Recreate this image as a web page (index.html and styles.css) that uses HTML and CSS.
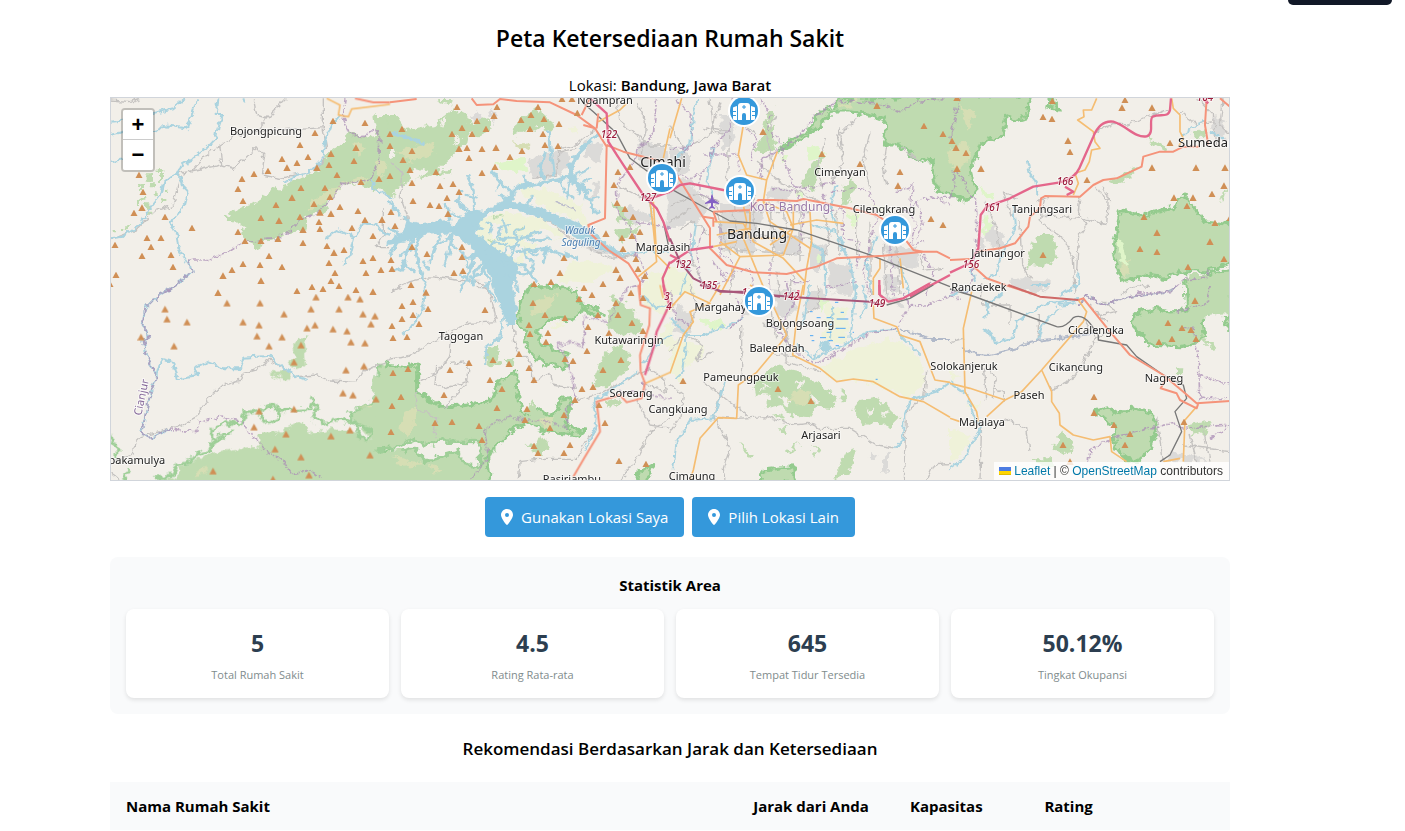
FILE: index.html
```html
<!DOCTYPE html>
<html lang="id">
<head>
<meta charset="utf-8">
<meta name="viewport" content="width=device-width, initial-scale=1">
<title>Peta Ketersediaan Rumah Sakit</title>
<link rel="stylesheet" href="styles.css">
</head>
<body>
<div class="toast" aria-hidden="true"></div>
<main class="page">
<h1 class="title">Peta Ketersediaan Rumah Sakit</h1>
<p class="place">Lokasi: <strong>Bandung, Jawa Barat</strong></p>

<section class="map" aria-label="Peta rumah sakit">
<svg class="map-canvas" viewBox="111 98 1118 382" preserveAspectRatio="xMidYMid slice">
<defs>
<filter id="rough" filterUnits="userSpaceOnUse" x="100" y="90" width="1140" height="400"><feTurbulence type="fractalNoise" baseFrequency="0.13" numOctaves="3" seed="4"/><feDisplacementMap in="SourceGraphic" scale="11" xChannelSelector="R" yChannelSelector="G"/></filter>
<filter id="wavy" filterUnits="userSpaceOnUse" x="100" y="90" width="1140" height="400"><feTurbulence type="fractalNoise" baseFrequency="0.16" numOctaves="2" seed="9"/><feDisplacementMap in="SourceGraphic" scale="7" xChannelSelector="R" yChannelSelector="G"/></filter>
<marker id="peak" markerUnits="userSpaceOnUse" markerWidth="22" markerHeight="20" refX="11" refY="10" viewBox="0 0 22 20"><path class="peak" d="M11 0 22 20H0Z"/></marker>
<g id="hospital"><circle class="pin-ring" r="16"/><circle class="pin-disc" r="14"/><path class="pin-icon" d="M-6 9V-5Q-6-8-3-8H3Q6-8 6-5V9H2V4Q2 2 0 2T-2 4V9ZM-7 9H-10Q-11 9-11 8V5H-8V4H-11V1H-8V0H-11V-3Q-11-4-10-4L-7-5ZM7 9H10Q11 9 11 8V5H8V4H11V1H8V0H11V-3Q11-4 10-4L7-5Z"/><path class="pin-cross" d="M0-6V-2M-2-4H2"/></g>
</defs>
<rect class="land" x="100" y="90" width="1140" height="400"/>

<!-- land cover -->
<g filter="url(#rough)">
<g transform="translate(110 95) scale(.3333)">
<path class="wood" d="M345 365 420 330 470 300 520 270 570 250 620 225 650 180 700 140 720 110 760 125 800 120 790 60 850 60V310L810 280 780 285 740 265 700 270 660 310 640 350 575 365 590 385 585 410 555 410 520 420 455 445 450 470 435 465 430 440 390 430 400 400 380 380 345 375Z"/>
<path class="scrub" d="M600 320 690 270 750 245 780 255 700 268 650 320 600 345ZM730 145 770 150 740 190ZM800 195 830 200 820 250 800 240Z"/>
<path class="wood" d="M85 265h14v14H85ZM110 238h16v16h-16ZM140 222h20v12h-20ZM120 262h18v18h-18ZM92 300h14v14H92ZM108 325h16v16h-16ZM152 310h14v14h-14ZM160 285h12v12h-12ZM112 350h12v12h-12ZM84 318h12v12H84ZM45 385h12v12H45ZM8 405h10v10H8ZM30 398h10v10H30ZM128 295h12v12h-12ZM150 240h12v18h-12Z"/>
</g>
<g transform="translate(110 285) scale(.3333)">
<path class="wood" d="M552 175 592 148 580 185 586 240 560 252 532 232 560 215ZM478 262 540 258 535 282 490 275Z"/>
<path class="wood" d="M200 585 215 545 305 505 370 490 450 485 440 445 500 445 570 410 610 455 650 430 720 440 785 470 720 385 770 365 800 330 805 240 850 235V600H130L150 575Z"/>
<path class="park-edge" d="M0 455 20 490 18 520M130 578 190 570 200 542 240 530 260 508 305 495 310 430 345 410 385 420 405 385 450 380 480 362 520 378 505 400 465 415 455 385M520 378 600 375 608 347 622 370 610 395 640 415 690 400 735 415 745 445 770 470 785 440 730 410 722 380 770 360 795 340 805 240M40 585 60 555M815 490 850 495M310 470 370 440"/>
<path class="scrub" d="M745 370 800 345 790 365ZM250 560 295 545 290 565 255 570Z"/>
</g>
<g transform="translate(390 95) scale(.3333)">
<path class="wood" d="M-10 60 20 60 50 105 90 100 130 90 190 40 230 60 250 100 220 150 180 190 130 240 60 260 -10 290ZM240 90 300 70 300 100 250 125ZM360 100 440 40 500 90 480 110 430 100 370 125ZM60 230 185 225 180 240ZM660 320 720 345 730 370 690 380ZM670 400 750 400 700 440ZM720 350 750 380 710 390ZM140 12 190 12 180 30Z"/>
<path class="land" d="M60 262 70 215 110 225 90 250ZM0 160 20 180 0 190ZM150 80 170 70 160 95ZM190 150 210 130 200 120Z"/>
<path class="farm" d="M390 265 480 290 575 330 590 390 480 345 390 290ZM250 380 330 350 460 370 540 430 440 450 380 520 270 440ZM540 500 620 500 670 520 600 560 500 560ZM535 100 565 90 560 120ZM780 540 830 530 820 600 760 600Z"/>
<path class="land" d="M290 400 320 380 340 400 310 430ZM400 440 460 400 520 430 450 450ZM340 470 380 440 400 460 370 500Z"/>
<path class="wood" d="M300 365 340 355 330 370ZM380 400 400 395 395 410ZM300 440 315 435 310 450Z"/>
<path class="scrub" d="M20 170 130 140 140 175 60 200ZM368 142 424 147 405 172Z"/>
<path class="grass" d="M315 205 400 185 418 235 340 228Z"/>
<path class="urban" d="M430 185 530 165 545 215 510 240 430 258 415 200ZM580 140 640 150 635 205 590 185ZM610 260 630 260 625 310 610 310ZM690 350 720 330 800 370 740 390ZM560 440 640 455 700 485 600 470ZM740 130 830 160 840 280 750 220ZM240 65 260 50 270 80 250 85ZM300 40 320 60 310 90Z"/>
</g>
<g transform="translate(390 285) scale(.3333)">
<path class="park" d="M425 0 385 60 382 110 410 135 405 185 460 235 520 250 535 205 460 180 440 135 490 100 550 105 580 70 620 95 640 85 620 65 575 60 560 20 530 10Z"/>
<path class="park" d="M-10 235 80 245 80 320 160 370 300 350 320 300 380 260 385 350 410 395 440 370 480 395 505 375 510 340 545 335 535 370 530 430 585 435 570 450 500 445 400 415 360 440 320 480 290 520 300 600H-10Z"/>
<path class="wood" d="M-45 280 -15 243 20 250V485H-60ZM-60 510 20 505V610H-60Z"/>
<path class="land" d="M-10 500 70 460 100 480 150 468 270 470 272 545 230 540 200 500 130 520 115 530 70 490 -10 500Z"/>
<path class="park-edge" d="M-40 495 10 492 70 462 100 480 150 468 270 470 272 545 230 540 200 500 130 520 115 530 70 490 40 498"/>
<path class="wood" d="M290 190 325 185 330 240 290 245ZM345 222 370 222 368 245 345 245ZM655 195 700 180 722 200 715 245 650 310 605 310 620 260ZM640 350 690 340 660 375ZM400 480 440 478 455 440 475 490 450 510ZM670 30 740 90 765 140 700 150 650 130ZM430 345 440 390 400 390Z"/>
<path class="park" d="M745 555 785 545 770 590 740 590Z"/>
<path class="scrub" d="M40 380 75 365 85 400 50 450 30 440ZM10 510 60 530 120 540 40 545ZM440 400 490 400 480 440ZM120 540 160 555 130 570ZM440 45 500 30 470 80 420 90Z"/>
<path class="farm" d="M760 65 820 90 850 70V-10H760ZM480 120 530 105 500 135ZM790 170 850 190V100Z"/>
</g>
<g transform="translate(670 95) scale(.3333)">
<path class="urban" d="M-10 240 60 250 110 330 100 375 -10 400ZM150 60 190 60 200 130 160 170ZM420 440 470 450 450 535 420 520ZM640 450 740 460 745 520 650 510ZM150 330 230 300 280 350 250 480 150 450ZM470 500 540 510 550 600 480 590ZM640 540 690 540 690 590 640 590ZM300 400 400 430 380 480 320 470ZM0 160 60 170 60 230 0 240ZM300 270 370 290 350 320 290 310Z"/>
<path class="farm" d="M-10 510 60 530 80 600H-10ZM520 340 570 350 550 400ZM600 330 650 330 630 350Z"/>
<path class="park" d="M330 165 370 130 420 105 440 55 500 35 500 12 850 0V300L800 290 790 200 740 190 690 150 640 150 650 100 640 70 540 50 480 52 440 100 370 150Z"/>
<path class="wood" d="M398 270 430 200 458 190 430 290ZM255 165 275 130 290 60 308 40 302 90 318 160 270 175ZM510 285 550 250 560 270 530 330 510 310Z"/>
<path class="scrub" d="M500 30 560 15 540 40ZM820 150 850 160V220L820 190Z"/>
<path class="grass" d="M410 160 450 150 462 180 420 195ZM530 360 560 360 560 390 535 385ZM380 290 400 290 395 310ZM440 480 455 480 455 500 440 500ZM335 180 350 180 350 200 335 200ZM690 380 705 380 700 400Z"/>
</g>
<g transform="translate(670 285) scale(.3333)">
<path class="farm" d="M450 250 520 210 650 160 700 170 755 230 765 290 720 340 640 310 540 280 500 290ZM0 160 100 180 100 220 40 250 30 290 0 260ZM470 60 530 70 530 180 460 160ZM-10 0 20 0 0 50Z"/>
<path class="urban" d="M20 60 70 80 60 150 10 140ZM300 10 380 20 380 80 330 100ZM420 20 460 10 470 60 400 80ZM640 30 680 35 700 70 640 50ZM640 520 660 500 660 560 630 560ZM210 40 240 80 220 100ZM600 500 620 515 600 520Z"/>
<path class="wood" d="M250 300 310 245 380 260 450 300 500 330 490 370 440 365 420 400 370 395 330 360 290 370 300 330 255 325ZM550 370 570 345 620 335 690 400 660 430 620 410 580 425ZM500 560 530 500 565 490 540 560 490 585ZM430 480 450 500 430 510ZM350 500 390 470 380 490 360 510ZM320 430 360 430 340 445ZM210 475 250 510 235 520ZM310 385 340 390 320 405ZM515 310 535 340 515 360Z"/>
<path class="land" d="M380 290 400 285 395 310ZM330 335 370 345 350 370ZM430 330 450 350 430 360ZM590 370 610 375 600 400ZM280 300 300 310 270 315ZM640 380 660 385 640 395Z"/>
<path class="scrub" d="M370 310 430 320 410 360 360 350Z"/>
<path class="park" d="M265 595 280 555 370 545 378 595Z"/>
<path class="grass" d="M80 95 165 110 150 140 95 110ZM440 40 480 50 450 80Z"/>
</g>
<g transform="translate(950 95) scale(.3333)">
<path class="park" d="M-10 0H245L230 50 210 80 170 60 160 120 90 150 60 230 75 290 50 320 -10 290ZM300 0 325 45 290 38Z"/>
<path class="wood" d="M-30 0H20V290H-30Z"/>
<path class="park" d="M515 345 580 362 670 340 700 300 740 340 760 380 850 390V505L760 530 690 530 640 550 580 540 515 560 490 470 502 400ZM705 560 780 535 850 525V620H710Z"/>
<path class="wood" d="M230 490 255 420 310 420 322 490 280 520 240 515ZM590 130 640 145 650 165 600 150ZM730 110 770 100 765 130 735 125ZM470 260 560 215 540 250 490 270ZM810 300 830 280 820 320Z"/>
<path class="scrub" d="M-10 170 50 130 65 190 20 230ZM30 30 80 50 50 110ZM520 490 540 490 530 550 510 530Z"/>
<path class="grass" d="M90 280 135 300 125 312 95 295ZM100 360 125 380 115 425 100 410ZM500 430 520 440 540 520 510 500Z"/>
<path class="urban" d="M100 430 130 380 170 450 130 460ZM180 555 290 550 290 580 190 575ZM85 430 100 430 110 490 80 480ZM790 60 830 90 820 140 790 120Z"/>
</g>
<g transform="translate(950 285) scale(.3333)">
<path class="park" d="M545 105 570 80 620 70 660 78 710 75 705 -10H850V100L780 92 760 110 765 155 740 175 690 185 600 180 560 140Z"/>
<path class="wood" d="M715 -30H850V30H715Z"/>
<path class="land" d="M770 90 830 85 835 130 790 160 765 130Z"/>
<path class="park" d="M432 380 470 368 500 385 540 370 605 385 622 420 600 490 560 530 520 520 485 470 500 430 455 398ZM820 105 850 100V150Z"/>
<path class="wood" d="M310 475 340 440 372 480 350 510 315 500ZM720 420 785 405 770 440 725 450ZM678 250 697 250 695 268 678 266ZM250 520 300 520 310 545 260 540ZM750 160 800 185 780 190Z"/>
<path class="urban" d="M190 0 290 0 285 25 210 20ZM660 500 720 510 780 530 650 530Z"/>
<path class="farm" d="M50 360 90 350 85 380ZM0 430 60 450 40 500 0 530ZM0 250 35 280 0 295Z"/>
</g>
</g>

<!-- rivers, reservoir and minor roads -->
<g filter="url(#wavy)">
<g transform="translate(110 95) scale(.3333)">
<path class="minor" d="M240 235 300 170 330 150 380 120 440 110 470 70 530 10M330 150 335 210 370 220 440 160 465 190 460 240 510 250 600 230 650 190M210 235 330 210M210 240 190 330 130 350 80 405 0 435M0 15 60 20 90 10M640 10 640 110 650 160M430 10 440 60 470 70M440 110 640 95M130 140 60 105M840 455 800 455 820 420 820 340"/>
<path class="river" d="M0 120 60 105 140 110 160 90 230 100 245 60 262 10M0 80 60 75M130 55 190 40 225 10M0 200 50 190M325 10 320 60 335 60 322 100 318 130 290 160 250 190 215 210 205 235 215 270 235 290 225 330 200 360 185 385 200 420 205 460 230 505M0 430 40 425 90 390 115 345 150 300 160 260 185 240 210 235M850 310 790 280 785 250M520 265 560 240 600 230 640 190 645 140 665 90 690 60M645 432 680 408 735 425 760 385 800 390 820 415 840 420M735 425 720 485 700 508M400 10 405 25"/>
<path class="river" d="M235 495 245 530 190 575 145 600"/>
</g>
<g transform="translate(110 285) scale(.3333)">
<path class="minor" d="M480 225 435 255 400 265 395 285 345 295 290 345 260 395 200 428 90 455 75 470 70 505 0 540M480 225 560 275 620 270 660 288 740 292 760 260 840 225M0 560 30 585"/>
<path class="river" d="M140 280 155 225 190 235 200 280 265 270 255 250 295 232 340 250 390 250 400 218 480 212 500 235 560 275 590 285M200 0 130 45 105 70 98 120 118 155 100 165 110 210 140 280 120 330 105 400 90 445 120 458 180 435"/>
</g>
<g transform="translate(390 95) scale(.3333)">
<path class="minor" d="M0 200 40 240 30 300 55 370 30 375M270 370 340 330 410 350 480 380 540 430 650 470 720 490M0 590 60 560 120 545 200 555 270 560 300 590M510 160 560 150 615 100M430 250 500 240 510 170 560 160M680 10 690 80 780 150 840 150M740 20 770 90 750 200M680 270 760 310 840 290M560 440 660 490 740 480"/>
<path class="lake" d="M-10 440 40 410 50 375 90 385 170 375 190 395 240 345 280 350 340 320 360 290 390 265 430 265 490 250 535 240 535 210 560 170 620 110 628 120 570 175 550 215 555 240 590 290 580 295 535 255 430 275 375 290 370 320 440 335 520 365 600 400 680 470 655 475 540 420 480 380 380 345 320 345 280 370 255 410 290 440 320 460 370 490 385 520 360 600 315 600 300 540 240 450 190 415 100 420 60 440 -10 450Z"/>
<path class="creek" d="M250 350 250 290 235 245M360 290 320 250 305 225M460 250 450 220 465 170M490 240 480 160 475 110M80 420 50 470 40 520 10 530M90 420 75 470 90 520 105 570M190 400 180 460 165 510M260 450 250 500 215 580M300 480 270 540 240 550M540 250 580 270 610 350 630 352M380 470 470 460 560 490M330 430 400 430 450 410M320 500 400 510 440 560M370 530 420 540 430 510M560 240 600 220M180 375 165 325M400 345 430 300M200 410 140 450 120 500M60 380 45 370M240 350 200 320 210 290M270 430 230 430M290 470 310 440 350 450M540 260 530 310M560 260 570 300M280 500 250 540 250 570M360 490 380 440M470 460 460 500M0 400 30 420M40 500 70 530M0 110 100 145M0 320 30 360"/>
<path class="inlet" d="M320 430 330 400 360 390M350 410 340 380M380 435 375 410 400 395M410 430 430 440 480 430M290 380 310 395 300 415M280 400 250 390M340 500 350 460 390 450M300 500 320 530 310 560M270 480 230 490 210 470M230 500 240 530M210 540 240 560M400 460 410 490 430 500M420 470 440 480M500 470 510 490M340 540 380 560 385 590M280 520 300 560 280 580M100 500 120 530M70 460 30 480M180 430 200 460M150 420 130 470M220 370 170 350M350 310 330 300M510 250 520 290 550 310M570 280 600 290M590 310 620 310M580 260 600 250M410 270 400 240M330 260 320 280M230 300 260 310M20 440 0 480"/>
<path class="river" d="M655 470 700 480 760 470 840 470M780 320 790 400"/>
<path class="runway" d="M497 322 557 345"/>
</g>
<g transform="translate(390 285) scale(.3333)">
<path class="minor" d="M0 222 50 215 140 165 190 135 240 115 320 110M185 150 180 210 140 265 85 290M180 235 235 230 230 290 160 310 135 290 140 240M160 370 235 290M80 320 75 370 140 395 135 460M370 120 375 190 420 230 430 290 480 265 485 300 560 310M385 585 390 530 470 520 560 520 600 450M690 585 740 520 780 440 840 400M260 0 300 20 320 110M560 345 620 330 700 290 780 250 820 280 830 320 760 295M740 340 780 420 840 430"/>
<path class="lake" d="M312 0 365 0 380 60 378 120 350 120 330 70Z"/>
<path class="river" d="M340 100 330 160 290 185 285 240M105 0 100 70 60 130 35 150M745 260 700 290 640 330 610 350 620 400 615 430 585 500M220 0 215 20M290 0 320 50M755 30 800 70 830 60M840 150 800 180 755 240"/>
</g>
<g transform="translate(670 95) scale(.3333)">
<path class="minor" d="M0 90 40 160 30 230M50 160 120 120 150 20M120 10 130 100 180 110M250 10 230 90 260 120M320 60 290 120 310 220M470 130 440 220 460 280M510 90 520 200 480 270M560 70 500 130 520 190M600 110 580 200 600 280M650 150 640 220 650 270M700 160 750 200M0 330 80 300 150 320M30 400 70 380 120 420M140 320 150 400 180 480M190 310 200 480M250 300 255 440M300 320 310 500M340 310 350 430M390 330 390 500M150 350 420 350M160 420 430 430M150 460 400 480M460 340 480 430 450 520M500 350 510 480M560 350 560 480M600 380 600 600M640 440 650 600M680 450 690 600M750 470 760 530 820 520M190 520 180 600M320 530 330 600M370 540 360 600M0 380 60 340M60 480 100 570M100 100 160 120M180 120 170 280M260 200 330 260 450 320"/>
<path class="river" d="M85 10 70 60 60 150 20 190 10 250M420 440 460 470 470 600M30 600 60 500 80 380M500 430 540 500 560 600M605 600 590 500 620 420M690 500 720 600M420 390 500 410 520 450M130 300 110 260 130 160M500 270 480 330 500 400"/>
</g>
<g transform="translate(670 285) scale(.3333)">
<path class="minor" d="M215 120V270M350 120 345 230 450 260M130 395 200 400 290 395 370 420 420 415 450 430 540 430 620 480 680 490M770 260 760 340 710 380 700 585M0 300 40 330 30 400 0 440M160 300 130 395 160 450 180 490 160 550 165 585M770 585 790 540 840 535M0 200 40 150 100 180 80 230 130 200M60 0 80 60 60 130M250 0 300 60 320 160M300 200 380 220M280 120 340 130M440 0 450 60 400 90M230 390 100 290M330 100 360 180"/>
<path class="river" d="M0 100 50 150 100 150 150 130 200 110 220 95M50 150 40 260 20 280M165 290 150 340 130 400 60 405 20 470 10 550M380 180 430 220 500 190 600 140 680 130M840 290 800 320 720 345 700 400 700 470 670 490M560 0 540 170M490 60 480 160M680 140 740 200 755 215M420 0 400 120M580 0 590 60 570 100"/>
<path class="slate" d="M840 165 790 165 690 130"/>
<path class="lake" d="M440 185 470 162 490 190 460 202ZM435 215 460 175 425 220Z"/>
</g>
<g transform="translate(950 95) scale(.3333)">
<path class="minor" d="M435 110 490 85 530 90 600 60 655 45M285 305 270 380 340 430 370 490 375 600M390 305 385 350 410 390 385 430 380 530M455 270 475 310 470 390 400 370M440 270 460 310 480 320M160 290 180 360 210 340M210 380 215 510 245 550M100 320 140 400 150 500M690 50 740 90 790 80M740 10 790 60 800 150M820 10 810 90 840 120M270 360 390 370M160 290 200 310M510 600 560 570 600 575M300 305 260 320"/>
<path class="river" d="M230 195 240 235 260 260 262 300M190 330 195 400 150 490 140 540 100 550M60 500 75 560M385 530 385 565 330 600M700 120 740 90 770 80M780 110 820 130"/>
</g>
<g transform="translate(950 285) scale(.3333)">
<path class="minor" d="M440 160 370 280 310 310 300 300M95 0 95 60 180 60 180 120M120 240 135 280 130 340M160 400 230 430 240 500M0 170 40 160M60 240 100 250 110 340M95 410 90 585M130 310 160 320 160 350M265 160 265 90M420 60 470 110M400 100 440 160 480 140M460 50 500 80 440 90M720 450 740 530M760 430 780 530M700 480 840 500M620 400 640 530"/>
<path class="river" d="M110 45 115 80 105 100M95 130 125 145 135 175 190 160 200 110 240 85 285 55 385 45M160 20 115 60M0 30 60 15M265 165 280 110 330 70M320 60 380 55M0 295 50 330 75 400 95 430 60 480 45 520 0 550M245 0 300 0"/>
<path class="slate" d="M385 60 410 30 460 60 540 35 640 25 680 5M40 185 60 205 120 210 200 190 240 170 440 145"/>
</g>
<g transform="translate(110 95) scale(.3333)"><path class="border" d="M705 10 700 70 720 120 760 125 800 100 810 130 805 200 780 255 700 265 660 310 630 350 570 375 530 415 500 430 405 440 350 475 290 495 235 495 245 530 190 575 145 600"/></g>
<g transform="translate(110 285) scale(.3333)"><path class="border" d="M200 0 130 45 105 70 98 120 118 155 100 165 110 210 140 280 120 330 105 400 90 445 120 458 180 435 260 440 268 408 330 395 400 410 415 445 450 470 460 495 520 530 545 568 600 555 632 580"/></g>
<g transform="translate(390 95) scale(.3333)"><path class="border" d="M800 10 790 120 740 165 740 190 680 270 680 340 720 400 740 440 740 480 770 540 750 570 710 580M740 380 840 400"/></g>
<g transform="translate(390 285) scale(.3333)"><path class="border" d="M710 10 655 110 580 95 580 185 545 170 500 180 530 220 550 290 555 345 530 365 530 430 480 410 405 405 360 395 300 420 285 440 295 520 240 585M690 320 760 330 840 340M760 290 770 340"/></g>
<g transform="translate(670 95) scale(.3333)">
<path class="border thin" d="M20 10 60 60 70 150 40 170M190 10 180 100 130 160 110 220 60 250 0 230M270 10 300 60 290 100 330 140 340 190 370 270 420 290M330 170 280 190 260 240M230 100 260 130 240 200M90 240 90 300 150 320M60 410 60 540M100 400 80 470 90 560M150 400 150 480 190 500 180 560M0 160 60 160M100 180 200 180 210 230M240 330 240 440M300 280 380 290 400 360 390 470M460 300 470 350 520 340 520 430 570 440 560 520M600 290 620 370 600 440 580 540 600 600M680 290 730 270 720 340 760 310 840 310M700 340 740 380 720 450 760 440M740 320 760 390 740 430M780 300 840 330M660 450 670 600M760 480 790 530 770 600M150 540 240 520 260 600M300 500 300 600M340 560 420 560M470 580 560 560M370 270 410 280 500 260M480 290 570 280 600 290M130 500 170 560 100 580"/>
<path class="border" d="M270 250 280 190 370 140 430 70 500 20 560 20 640 30 690 50 740 20 830 10"/>
</g>
<g transform="translate(670 285) scale(.3333)"><path class="border" d="M840 35 760 65 720 60 680 130 600 145 500 205 440 235 400 220 360 180 310 120 290 110M180 130 220 90 200 40M720 60 700 20M350 0 370 60 340 110M0 20 20 100 60 120"/></g>
<g transform="translate(950 95) scale(.3333)"><path class="border" d="M30 10 0 130M20 220 60 300 80 310 80 460 65 560M560 595 660 590 700 555 770 550 780 520M0 310 15 280 10 230 25 220"/></g>
<g transform="translate(950 285) scale(.3333)"><path class="border" d="M385 60 410 30 460 60 540 35 640 25M780 0 775 55 680 80M690 130 730 130 745 220 750 350M745 270 840 300M415 530 420 495 485 460 600 430 670 415 700 430 840 420M745 340 830 340M780 460 830 430M0 20 60 20M0 30 30 40"/></g>
</g>

<!-- main roads and railways -->
<g transform="translate(110 95) scale(.3333)"><path class="secondary" d="M650 10 690 30 685 60 715 65 725 42 840 28"/><path class="primary" d="M735 10 790 22 840 22"/></g>
<g transform="translate(390 95) scale(.3333)">
<path class="rail" d="M580 25 610 50 680 115 720 190 800 250 840 280M765 300 800 340 820 380 835 450"/>
<path class="secondary" d="M840 100 820 190M625 80 690 45 710 25M790 320 800 480 840 520M780 320 790 400 800 500 745 545"/>
<path class="primary" d="M0 22 80 12M245 10 260 30 310 28 330 12 380 18 480 22 560 60 615 100 650 155 645 370 595 390 600 415 655 465 715 505 750 560 750 600M615 100 580 90M575 60 600 10M650 150 700 170 800 195 860 250M625 55 620 100"/>
<path class="motorway" d="M600 10 650 55 655 140 700 210 760 300 800 340 820 380 840 440M770 315 840 290M840 500 818 550 825 600"/>
</g>
<g transform="translate(390 285) scale(.3333)"><path class="secondary" d="M765 295 840 262M810 0 820 40"/><path class="primary" d="M745 0 752 60 780 70 778 120 750 210 752 260 765 295 755 340 710 352 690 330 620 350 630 440 585 515 550 575"/><path class="motorway" d="M820 0 838 60 800 140 790 190 765 270"/></g>
<g transform="translate(670 95) scale(.3333)">
<path class="secondary" d="M220 90 205 180 230 240 290 255 322 170M290 255 280 320 350 350 370 400 340 480 210 485 150 440M220 330 230 380 220 430 245 490 290 600M130 380 220 385 250 440 340 490 405 560M210 485 150 600M420 350 425 440 410 520 400 600M360 390 440 375 520 385M280 320 300 380 420 460M35 10 0 130M240 345 240 430 320 430M140 420 240 400M630 490 630 520 610 550 610 600M690 490 700 580M370 330 370 400 300 450M130 455 200 440"/>
<path class="rail" d="M0 280 90 330 180 378 260 385 380 405 600 480 840 575"/>
<path class="primary" d="M20 240 120 400 120 460 170 510 250 532 350 537 440 515 500 490 640 482 760 470 800 470 840 490M130 350 240 345 265 315 310 315 380 318 400 312 540 340 620 360 680 400 730 465 760 470M100 365 130 370 130 395M130 350 140 380"/>
<path class="motorway" d="M0 290 30 270 60 265 160 285 200 300M0 505 60 465 130 455M840 540 720 605M628 600 628 555M0 480 20 490"/>
<path class="toll" d="M0 430 30 500 70 550 150 590 240 590 330 605"/>
</g>
<g transform="translate(670 285) scale(.3333)">
<path class="secondary" d="M0 265 40 150 70 110 60 80 120 55 45 20 0 70M120 50 150 0M290 20 350 150 320 190 260 262 205 300 200 400 145 398 90 460 70 555 60 585M400 0 380 100 368 210 450 250 500 290 550 282 610 290 690 335 760 350 840 397M610 60 612 100 680 125 690 150 750 170 795 285 840 292M240 0 290 30"/>
<path class="toll" d="M90 0 150 17 230 25 400 38 600 50 640 60"/>
<path class="rail" d="M650 60 720 40 790 0"/><path class="motorway" d="M628 0 630 30 655 50 700 40 780 -5M385 15 385 45"/>
<path class="marsh" d="M420 80h8M440 98h12M470 98h12M495 52h10M512 82h10M500 102h35M475 118h12M497 130h30M420 152h10M450 158h18M505 157h20M470 142h14M425 167h8M497 182h10M475 167h14M548 142h4M617 283h6"/>
</g>
<g transform="translate(950 95) scale(.3333)">
<path class="secondary" d="M440 10 425 45 400 45 402 65 383 75 430 110 435 140 450 160 425 165 418 200 405 225 375 235 385 265 370 300M665 10 670 40 690 60 690 110 700 130 685 155"/>
<path class="primary" d="M0 495 60 492M60 505 110 550 180 575 260 600M80 470 150 460 195 445 235 395 240 365 270 340 273 310 285 303 390 305 430 270 460 255 500 250 575 215 580 185 630 170 670 170 700 155 750 155M770 10 765 90 775 150M810 10 840 35"/>
<path class="motorway" d="M0 533 60 505 85 460 92 360 110 335 180 310 250 275 330 262Q375 250 388 220L430 125Q450 75 490 80C530 92 555 130 590 124 615 115 595 75 608 65 630 55 655 70 660 45L663 10M345 275 370 290 350 300M760 12 775 25"/>
</g>
<g transform="translate(950 285) scale(.3333)">
<path class="secondary" d="M65 20 40 130 45 320 80 380 85 410M0 295 60 310 165 345 110 395M385 45 410 80 400 110 275 255 215 320 165 345M275 255 305 320 305 350 328 385 330 420 370 450 430 465 480 455 485 500 530 530M740 365 705 405 700 530M640 530 690 520M0 400 30 410"/>
<path class="rail" d="M0 12 60 30 320 125Q345 130 370 98 395 85 420 115L445 150 445 165 530 180 560 215 640 270 700 300 710 340 675 380 695 440 660 510 630 530"/>
<path class="primary" d="M385 45 400 40 480 140 540 210 640 270 700 320 740 355 840 348M650 280 632 310 680 325 690 345 740 370 745 355"/>
<path class="brick" d="M175 0 270 35 385 45"/>
</g>

<!-- peaks -->
<g class="peaks" marker-start="url(#peak)" marker-mid="url(#peak)" marker-end="url(#peak)">
<polyline transform="translate(110 95) scale(.3333)" points="669,78 765,84 615,114 570,150 516,192 594,186 561,204 531,218 474,228 432,237 396,252 384,282 399,318 663,176 657,210 621,218 738,158 732,198 681,240 753,261 807,252 573,279 645,279 546,308 660,306 498,330 612,327 453,369 507,377 570,366 690,336 744,348 663,356 630,352 627,381 630,402 579,404 765,375 816,374 726,399 789,423 384,411 405,438 453,438 504,432 579,444 87,240 99,291 96,338 72,354 165,366 246,399 111,429 153,429 123,456 96,483 15,450 183,480 189,516 18,540 0,567 477,483 450,510 516,516 399,507 366,525 339,542 453,557 651,453 672,473 702,465 657,504 675,534 768,534 759,498 789,489 813,525 663,558 687,573 606,576 639,582 561,588 738,585 789,590 324,593 840,117 840,243"/>
<polyline transform="translate(110 285) scale(.3333)" points="351,54 450,54 618,36 714,36 750,42 603,72 687,72 522,87 399,111 447,120 441,153 516,156 477,183 591,129 615,120 669,132 711,138 759,87 795,93 783,117 723,171 765,174 573,180 552,231 708,255 762,243 165,72 171,102 231,111 93,156 192,183 699,324 729,330 798,342 447,378 552,372 432,426 528,447 663,453 720,435 495,492 573,516 780,510 309,558 597,570 489,582"/>
<polyline transform="translate(390 95) scale(.3333)" points="36,102 66,168 39,195 60,225 66,264 69,318 0,153 201,36 321,36 312,62 261,78 216,99 288,102 246,117 186,117 207,161 231,159 276,162 318,158 237,189 315,216 276,234 138,231 150,273 189,267 207,291 171,309 120,330 147,333 174,356 444,36 423,60 393,75 462,72 507,87 420,102 459,117 465,150 504,153 396,168 360,186 516,12 546,12 562,54 720,216 684,231 672,270 681,324 705,342 729,366 648,416 696,429 726,423 750,411 699,462 738,492 744,522 765,543 678,524 690,548 639,567 582,579 522,489 510,534 483,561 432,567 723,594 15,393 66,456 111,477 216,456 216,486 219,528 192,534 63,570 108,592 6,522 3,351 3,495"/>
<polyline transform="translate(390 285) scale(.3333)" points="36,63 69,51 114,72 36,102 69,90 87,117 51,156 9,159 6,123 285,75 429,54 465,90 525,99 417,120 420,147 474,144 468,171 567,42 606,30 759,39 678,54 684,90 624,90 594,126 657,144 726,114 759,138 591,198 525,222 549,228 693,225 639,255 609,306 576,312 555,345 627,360 645,414 387,207 417,249 432,285 357,237 309,225 237,234 180,255 300,285 336,312 162,330 54,252 9,264 33,336 6,363 321,369 135,414 186,411 267,423 276,465 405,405 411,372 480,429 522,390 432,483 444,504 540,480 522,504 687,528 768,537 3,441"/>
<polyline transform="translate(670 95) scale(.3333)" points="621,32 762,93 819,117 279,110 456,177 570,207 690,231 684,272 783,372 819,390"/>
<polyline transform="translate(670 285) scale(.3333)" points="39,288 324,312 423,348"/>
<polyline transform="translate(950 95) scale(.3333)" points="21,8 307,18 279,66 306,72 354,137 360,171 525,15 516,38 606,38 660,144 606,218 738,218 825,218 822,272 786,297 729,308 672,308 711,333 795,384 582,366 621,413 570,462 621,471 780,440 822,492 714,516 279,480 411,255 18,158 48,174 21,221 93,221 6,138 840,369"/>
<polyline transform="translate(950 285) scale(.3333)" points="735,47 654,114 696,129 723,135 738,162 666,162 627,171 432,336 432,384 492,420 540,447 525,480 339,480 360,530 702,411"/>
</g>
<path class="plane" d="M712 194 713 196 713 199 719 203 719 204 713 203 713 206 715 208 715 209 712 208 709 209 709 208 711 206 711 203 705 204 705 203 711 199 711 196Z"/>

<!-- place names -->
<g class="names">
<text x="266" y="135">Bojongpicung</text><text x="605" y="104">Ngampran</text><text x="461" y="340">Tagogan</text><text x="663" y="251">Margaasih</text><text x="629" y="344">Kutawaringin</text><text x="631" y="397">Soreang</text><text x="678" y="413">Cangkuang</text><text x="572" y="483">Pasirjambu</text><text x="692" y="480">Cimaung</text><text x="840" y="176">Cimenyan</text><text x="884" y="213">Cilengkrang</text><text x="724" y="311">Margahayu</text><text x="800" y="327">Bojongsoang</text><text x="777" y="352">Baleendah</text><text x="741" y="381">Pameungpeuk</text><text x="821" y="439">Arjasari</text><text x="964" y="370">Solokanjeruk</text><text x="982" y="426">Majalaya</text><text x="1029" y="399">Paseh</text><text x="1076" y="371">Cikancung</text><text x="1096" y="334">Cicalengka</text><text x="1164" y="382">Nagreg</text><text x="979" y="291">Rancaekek</text><text x="998" y="257">Jatinangor</text><text x="1042" y="213">Tanjungsari</text><text x="132" y="464">Cipakamulya</text>
<text class="city" x="663" y="167">Cimahi</text><text class="city" x="757" y="239">Bandung</text><text class="town" x="1211" y="147">Sumedang</text>
<text class="region" x="790" y="211">Kota Bandung</text><text class="region small" transform="translate(145 398) rotate(-78)">Cianjur</text>
<text class="water-name" x="580" y="234">Waduk</text><text class="water-name" x="581" y="246">Saguling</text>
</g>
<g class="shields">
<text x="609" y="138">122</text><text x="648" y="201">127</text><text x="683" y="268">132</text><text x="709" y="289">135</text><text x="750" y="296">138</text><text x="791" y="300">142</text><text x="877" y="307">149</text><text x="971" y="268">156</text><text x="992" y="211">161</text><text x="1065" y="185">166</text><text x="1205" y="101">164</text><text x="667" y="300">3</text><text x="669" y="310">4</text>
</g>
<use href="#hospital" x="744" y="111"/><use href="#hospital" x="662" y="178"/><use href="#hospital" x="740" y="191"/><use href="#hospital" x="895" y="230"/><use href="#hospital" x="759" y="301"/>
</svg>
<div class="zoom"><button type="button" aria-label="Perbesar">+</button><button type="button" aria-label="Perkecil">−</button></div>
<div class="credit"><svg class="flag" viewBox="0 0 12 8" aria-hidden="true"><path fill="#4c7be1" d="M0 0h12v4H0z"/><path fill="#ffd500" d="M0 4h12v3H0z"/><path fill="#e0bc00" d="M0 7h12v1H0z"/></svg> <a href="#leaflet">Leaflet</a> | © <a href="#osm">OpenStreetMap</a> contributors</div>
</section>

<div class="actions">
<button type="button" class="btn"><svg class="btn-icon" viewBox="0 0 384 512" aria-hidden="true"><path d="M215.700 499.200C267 435 384 279.400 384 192C384 86 298 0 192 0S0 86 0 192c0 87.400 117 243 168.300 307.200c12.300 15.300 35.100 15.300 47.400 0zM192 128a64 64 0 1 1 0 128 64 64 0 1 1 0-128z"/></svg>Gunakan Lokasi Saya</button>
<button type="button" class="btn"><svg class="btn-icon" viewBox="0 0 384 512" aria-hidden="true"><path d="M215.700 499.200C267 435 384 279.400 384 192C384 86 298 0 192 0S0 86 0 192c0 87.400 117 243 168.300 307.200c12.300 15.300 35.100 15.300 47.400 0zM192 128a64 64 0 1 1 0 128 64 64 0 1 1 0-128z"/></svg>Pilih Lokasi Lain</button>
</div>

<section class="stats">
<h2 class="stats-title">Statistik Area</h2>
<div class="stats-grid">
<div class="card"><div class="value">5</div><div class="label">Total Rumah Sakit</div></div>
<div class="card"><div class="value">4.5</div><div class="label">Rating Rata-rata</div></div>
<div class="card"><div class="value">645</div><div class="label">Tempat Tidur Tersedia</div></div>
<div class="card"><div class="value">50.12%</div><div class="label">Tingkat Okupansi</div></div>
</div>
</section>

<h2 class="subtitle">Rekomendasi Berdasarkan Jarak dan Ketersediaan</h2>
<table class="list">
<thead><tr><th class="col-name">Nama Rumah Sakit</th><th class="col-dist">Jarak dari Anda</th><th class="col-cap">Kapasitas</th><th>Rating</th></tr></thead>
</table>
</main>
</body>
</html>
```
FILE: styles.css
```css
* { box-sizing: border-box; }
body { margin: 0; padding-right: 65px; background: #fff; color: #000; font: 15px/24px "Open Sans", "Noto Sans", sans-serif; }
.toast { position: fixed; top: 0; right: 13px; width: 104px; height: 5px; border-radius: 0 0 6px 6px; background: #111827; }
.page { max-width: 1120px; margin: 0 auto; padding-top: 22px; }
.title { margin: 0 0 19px; font-size: 23px; line-height: 32px; font-weight: 600; text-align: center; }
.place { margin: 0; text-align: center; }
.place strong { font-weight: 600; }

.map { position: relative; height: 384px; border: 1px solid #d1d5db; overflow: hidden; }
.map-canvas { display: block; width: 100%; height: 100%; }
.zoom { position: absolute; top: 10px; left: 10px; display: flex; flex-direction: column; border: 2px solid rgba(0,0,0,.2); border-radius: 4px; background-clip: padding-box; }
.zoom button { width: 30px; height: 30px; padding: 0; border: 0; background: #fff; color: #000; font: bold 22px/30px "Liberation Sans", sans-serif; border-radius: 0 0 2px 2px; }
.zoom button:first-child { border-bottom: 1px solid #ccc; border-radius: 2px 2px 0 0; }
.credit { position: absolute; right: 0; bottom: 0; padding: 0 6px 0 5px; background: rgba(255,255,255,.8); color: #333; font: 12px/18px "Liberation Sans", sans-serif; }
.credit a { color: #0078a8; text-decoration: none; }
.flag { width: 12px; height: 8px; }

.land { fill: #f2efe9; }
.wood { fill: #bfdbb0; }
.park { fill: #bfdbb0; stroke: #94cb8e; stroke-width: 9; stroke-linejoin: round; }
.park-edge { fill: none; stroke: #9fcf98; stroke-width: 10; stroke-linejoin: round; }
.scrub { fill: #d6deb4; }
.farm { fill: #eff2d9; }
.grass { fill: #dff5c9; }
.urban { fill: #dbdad8; }
.lake { fill: #aad3df; }
.minor, .river, .creek, .inlet, .border, .secondary, .primary, .motorway, .toll, .rail, .brick, .marsh, .runway, .slate { fill: none; stroke-linejoin: round; }
.minor { stroke: #c4c2c0; stroke-width: 4; }
.river { stroke: #aad3df; stroke-width: 6; }
.slate { stroke: #b1b9c9; stroke-width: 6; }
.creek { stroke: #aad3df; stroke-width: 9; stroke-linecap: round; }
.inlet { stroke: #aad3df; stroke-width: 7; stroke-linecap: round; }
.runway { stroke: #bbbbcc; stroke-width: 5; }
.border { stroke: #ab8fb5; stroke-opacity: .75; stroke-width: 5; stroke-dasharray: 16 4 5 4; }
.thin { stroke-width: 4; }
.secondary { stroke: #f5bd72; stroke-width: 5; }
.primary { stroke: #f5937a; stroke-width: 6; }
.motorway { stroke: #e4668b; stroke-width: 7; }
.toll { stroke: #a8577a; stroke-width: 6; }
.brick { stroke: #cf6a68; stroke-width: 6; }
.rail { stroke: #777; stroke-width: 4; }
.marsh { stroke: #4da6f5; stroke-width: 3; }
.peak { fill: #d08f55; }
.peaks { fill: none; stroke: none; }
.plane { fill: #8461c4; }
.names, .shields { font: 11px "Noto Sans", sans-serif; text-anchor: middle; paint-order: stroke; stroke: rgba(255,255,255,.6); stroke-width: 2px; stroke-linejoin: round; fill: #222; }
.names .town { font-size: 13px; }
.names .city { font-size: 14px; }
.names .region { font-size: 12px; fill: #9a7aa8; }
.names .small { font-size: 11px; fill: #85689a; }
.names .water-name { font-size: 10px; font-style: italic; fill: #4d80b3; }
.shields { font-size: 10px; font-style: italic; font-weight: 500; fill: #9b1b3b; }
.pin-ring { fill: #fff; }
.pin-disc { fill: #3498db; }
.pin-icon { fill: #fff; }
.pin-cross { fill: none; stroke: #3498db; stroke-width: 1px; }

.actions { display: flex; justify-content: center; gap: 8px; margin: 16px 0 20px; }
.btn { display: flex; align-items: center; gap: 8px; padding: 8px 16px; border: 0; border-radius: 4px; background: #3498db; color: #fff; font: inherit; }
.btn-icon { width: 12px; height: 16px; fill: #fff; }

.stats { padding: 16px; border-radius: 8px; background: #f9fafb; text-align: center; }
.stats-title { margin: 0 0 12px; font-size: 15px; line-height: 24px; font-weight: 700; }
.stats-grid { display: grid; grid-template-columns: repeat(4, 1fr); gap: 12px; }
.card { padding: 18px 16px 13px; border-radius: 8px; background: #fff; box-shadow: 0 2px 4px rgba(0,0,0,.1); }
.value { color: #2c3e50; font-size: 23px; line-height: 32px; font-weight: 700; }
.label { margin-top: 6px; color: #7f8c8d; font-size: 11px; line-height: 20px; }
.subtitle { margin: 21px 0 19px; font-size: 17px; line-height: 28px; font-weight: 600; text-align: center; }
.list { width: 100%; border-collapse: collapse; table-layout: fixed; background: #f9fafb; }
.list th { padding: 12px 16px; text-align: left; font-weight: 700; }
.col-name { width: 56%; }
.col-dist { width: 14%; }
.col-cap { width: 12%; }
```
